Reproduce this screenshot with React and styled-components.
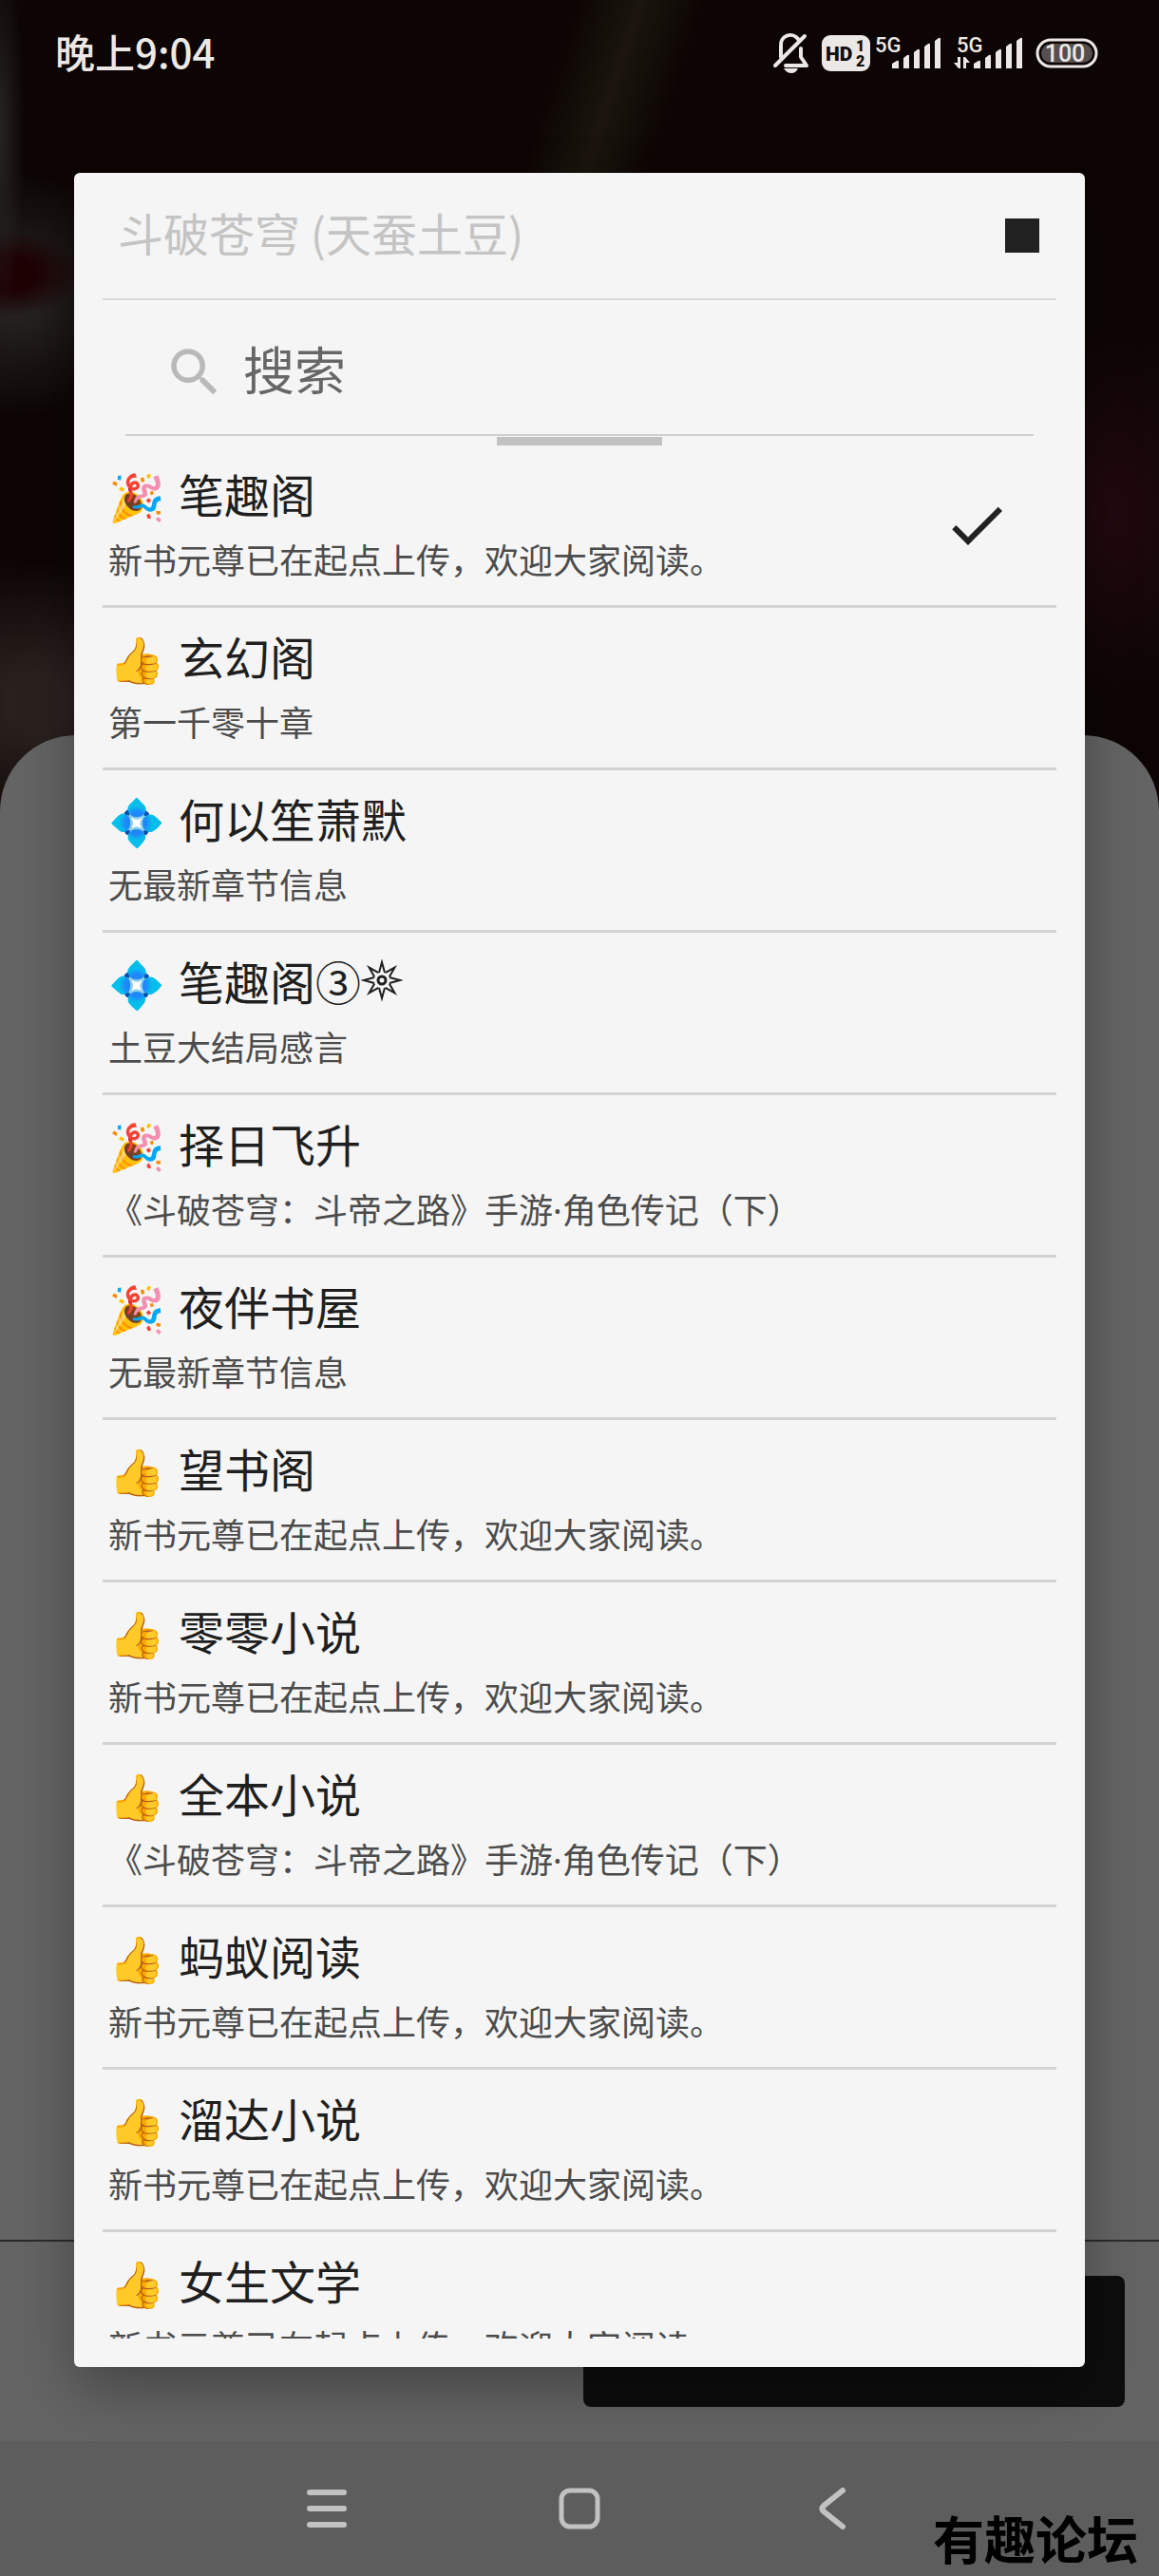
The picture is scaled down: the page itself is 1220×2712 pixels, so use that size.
import React, { useState } from 'react';
import styled, { createGlobalStyle } from 'styled-components';

const GlobalStyle = createGlobalStyle`
  * {
    box-sizing: border-box;
  }
  body {
    margin: 0;
    font-family: 'Noto Sans CJK SC', 'Noto Sans', sans-serif;
  }
  button {
    border: 0;
    padding: 0;
    background: none;
    font: inherit;
    color: inherit;
    text-align: left;
  }
`;

const Page = styled.div`
  position: relative;
  display: flex;
  flex-direction: column;
  height: 100vh;
  overflow: hidden;
  background:
    radial-gradient(ellipse 26px 200px at 0 140px, #262422, transparent),
    radial-gradient(ellipse 90px 46px at 0 288px, #1e0003 40%, transparent),
    radial-gradient(ellipse 120px 130px at 20px 310px, #24211f 20%, transparent),
    radial-gradient(ellipse 160px 150px at 40px 740px, #2a211f 20%, transparent),
    radial-gradient(ellipse 120px 200px at 1170px 540px, #220910, transparent),
    linear-gradient(108deg, transparent 45%, #1b150e 50%, transparent 55%) 0 0 / 100% 400px no-repeat,
    #0c0503;
`;

const StatusBar = styled.header`
  display: flex;
  align-items: center;
  justify-content: space-between;
  height: 112px;
  padding: 0 64px 0 58px;
  color: #ece8e6;
`;

const Time = styled.time`
  padding-bottom: 6px;
  font-size: 42px;
  font-weight: 500;
`;

const StatusIcons = styled.div`
  display: flex;
  align-items: center;
  gap: 13px;
  svg {
    display: block;
    font-family: Roboto, sans-serif;
  }
`;

const IconGroup = styled.div`
  display: flex;
  align-items: center;
`;

const Sheet = styled.main`
  flex: 1;
  margin-top: 662px;
  border-radius: 80px 80px 0 0;
  background: #646464;
`;

const ActionBar = styled.div`
  display: flex;
  justify-content: flex-end;
  height: 212px;
  padding: 36px;
  border-top: 2px solid #2b2b2b;
  background: #646464;
`;

const ReadButton = styled.button`
  width: 50%;
  max-width: 570px;
  height: 138px;
  border-radius: 8px;
  background: #0d0d0d;
`;

const NavBar = styled.nav`
  display: flex;
  align-items: center;
  justify-content: center;
  gap: 206px;
  height: 142px;
  background: #5d5d5d;
`;

const NavButton = styled.button`
  position: relative;
  z-index: 1;
  width: 60px;
  height: 60px;
  svg {
    display: block;
  }
`;

const Watermark = styled.div`
  position: absolute;
  right: 22px;
  bottom: 12px;
  z-index: 1;
  color: #000;
  font-size: 54px;
  font-weight: 700;
  line-height: 56px;
`;

const Overlay = styled.div`
  position: absolute;
  inset: 0;
  display: flex;
  padding: 182px 78px 220px;
`;

const Dialog = styled.section`
  flex: 1;
  display: flex;
  flex-direction: column;
  min-width: 0;
  padding: 0 30px 30px;
  border-radius: 6px;
  background: #f5f5f5;
  box-shadow: 0 24px 60px rgba(0, 0, 0, 0.3);
`;

const DialogHeader = styled.div`
  display: flex;
  align-items: center;
  justify-content: space-between;
  height: 134px;
  padding: 0 18px 0 16px;
  border-bottom: 2px solid #dadada;
`;

const DialogTitle = styled.h1`
  margin: 0;
  padding-bottom: 8px;
  color: #c4c4c4;
  font-size: 48px;
  font-weight: 400;
  line-height: 64px;
`;

const StopButton = styled.button`
  width: 36px;
  height: 36px;
  background: #212121;
`;

const SearchBox = styled.label`
  display: flex;
  align-items: center;
  gap: 18px;
  height: 143px;
  margin: 0 24px;
  padding: 10px 40px 0;
  border-bottom: 2px solid #d0d0d0;
`;

const SearchInput = styled.input`
  flex: 1;
  min-width: 0;
  padding: 0 0 8px;
  border: 0;
  outline: 0;
  background: none;
  color: #212121;
  font: inherit;
  font-size: 54px;
  line-height: 72px;
  &::placeholder {
    color: #666;
    opacity: 1;
  }
`;

const LoadingBar = styled.div`
  flex: none;
  align-self: center;
  width: 174px;
  height: 9px;
  margin-top: 1px;
  background: #c1c1c1;
`;

const SourceList = styled.ul`
  flex: 1;
  min-height: 0;
  margin: 0;
  padding: 0;
  overflow: hidden;
  list-style: none;
`;

const SourceItem = styled.li`
  border-bottom: 3px solid #d3d3d3;
`;

const SourceButton = styled.button`
  display: flex;
  align-items: center;
  justify-content: space-between;
  width: 100%;
  height: 168px;
  padding: 0 48px 0 6px;
`;

const SourceText = styled.span`
  display: flex;
  flex-direction: column;
  gap: 12px;
`;

const SourceName = styled.span`
  display: flex;
  align-items: flex-start;
  height: 64px;
  color: #1f1f1f;
  font-size: 48px;
  line-height: 64px;
`;

const Emoji = styled.span`
  width: 74px;
  font-family: 'Noto Color Emoji', sans-serif;
  line-height: 76px;
`;

const SunMark = styled.svg`
  align-self: flex-end;
`;

const Chapter = styled.span`
  color: #4c4c4c;
  font-family: 'Noto Sans', 'Noto Sans CJK SC', sans-serif;
  font-size: 36px;
  line-height: 56px;
`;

const sources = [
  { mark: '🎉', name: '笔趣阁', chapter: '新书元尊已在起点上传，欢迎大家阅读。' },
  { mark: '👍', name: '玄幻阁', chapter: '第一千零十章' },
  { mark: '💠', name: '何以笙萧默', chapter: '无最新章节信息' },
  { mark: '💠', name: '笔趣阁③', sun: true, chapter: '土豆大结局感言' },
  { mark: '🎉', name: '择日飞升', chapter: '《斗破苍穹：斗帝之路》手游·角色传记（下）' },
  { mark: '🎉', name: '夜伴书屋', chapter: '无最新章节信息' },
  { mark: '👍', name: '望书阁', chapter: '新书元尊已在起点上传，欢迎大家阅读。' },
  { mark: '👍', name: '零零小说', chapter: '新书元尊已在起点上传，欢迎大家阅读。' },
  { mark: '👍', name: '全本小说', chapter: '《斗破苍穹：斗帝之路》手游·角色传记（下）' },
  { mark: '👍', name: '蚂蚁阅读', chapter: '新书元尊已在起点上传，欢迎大家阅读。' },
  { mark: '👍', name: '溜达小说', chapter: '新书元尊已在起点上传，欢迎大家阅读。' },
  { mark: '👍', name: '女生文学', chapter: '新书元尊已在起点上传，欢迎大家阅读。' },
];

function Signal({ active }) {
  return (
    <svg width="73" height="44" viewBox="0 0 73 44" fill="currentColor">
      <text x="3" y="21" fontSize="22" fontWeight="500">
        5G
      </text>
      {active && <path d="M7 26v12H5l-5-6h4v-6zM10 38V26h2l5 6h-4v6z" />}
      <path d="M21 33l5-3q2-1 2 1v7h-7zM33 27l4-3q2-1 2 1v13h-6zM44 21l4-3q2-1 2 1v19h-6zM55 15l4-3q2-1 2 1v25h-6zM66 9l4-3q2-1 2 1v31h-6z" />
    </svg>
  );
}

function Sun() {
  return (
    <SunMark width="44" height="54" viewBox="-22 -22 44 54" fill="none" stroke="currentColor" strokeWidth="2">
      <circle r="4" strokeWidth="3" />
      {[0, 45, 90, 135, 180, 225, 270, 315].map((deg) => (
        <path key={deg} d="M-3-8L0-19L3-8" transform={`rotate(${deg})`} />
      ))}
    </SunMark>
  );
}

function App() {
  const [selected, setSelected] = useState(0);
  const [keyword, setKeyword] = useState('');

  const shown = sources.filter((item) => item.name.includes(keyword));

  return (
    <>
      <GlobalStyle />
      <Page>
        <StatusBar>
          <Time>晚上9:04</Time>
          <StatusIcons>
            <IconGroup>
              <svg width="52" height="44" viewBox="0 0 52 44" fill="none" stroke="currentColor" strokeWidth="4" strokeLinecap="round" strokeLinejoin="round">
                <path d="M9 26V14a10 10 0 0 1 18-7M30 17v9l6 9H14M3 35L34 4" />
                <path d="M12 38h15q-2 5-7 5t-8-5z" fill="currentColor" stroke="none" />
              </svg>
              <svg width="53" height="38" viewBox="0 0 53 38">
                <rect width="51" height="38" rx="9" fill="currentColor" />
                <g fill="#120c0a" fontWeight="900">
                  <text x="4" y="27" fontSize="21">HD</text>
                  <text x="36" y="17" fontSize="16">1</text>
                  <text x="36" y="33" fontSize="16">2</text>
                </g>
              </svg>
              <Signal />
            </IconGroup>
            <Signal active />
            <svg width="66" height="32" viewBox="0 0 66 32">
              <rect x="2" y="2" width="62" height="28" rx="14" fill="none" stroke="currentColor" strokeWidth="3" />
              <rect x="6" y="6" width="54" height="20" rx="10" fill="#55504e" />
              <text x="31" y="25" textAnchor="middle" fontSize="25" fontWeight="500" fill="currentColor">
                100
              </text>
            </svg>
          </StatusIcons>
        </StatusBar>
        <Sheet />
        <ActionBar>
          <ReadButton aria-label="阅读" />
        </ActionBar>
        <NavBar>
          <NavButton aria-label="菜单">
            <svg width="60" height="60" fill="none" stroke="#c2c2c2" strokeWidth="6" strokeLinecap="round">
              <path d="M12 13h36M12 30h36M12 47h36" />
            </svg>
          </NavButton>
          <NavButton aria-label="主页">
            <svg width="60" height="60" fill="none" stroke="#c2c2c2" strokeWidth="5">
              <rect x="11" y="11" width="38" height="38" rx="9" />
            </svg>
          </NavButton>
          <NavButton aria-label="返回">
            <svg width="60" height="60" fill="none" stroke="#c2c2c2" strokeWidth="6" strokeLinecap="round" strokeLinejoin="round">
              <path d="M41 11L21 27q-3 3 0 6l20 16" />
            </svg>
          </NavButton>
        </NavBar>
        <Overlay>
          <Dialog role="dialog" aria-labelledby="book-title">
            <DialogHeader>
              <DialogTitle id="book-title">斗破苍穹 (天蚕土豆)</DialogTitle>
              <StopButton aria-label="停止" />
            </DialogHeader>
            <SearchBox>
              <svg width="66" height="66" viewBox="0 0 24 24" fill="#b9b9b9">
                <path d="M15.5 14h-.79l-.28-.27A6.471 6.471 0 0 0 16 9.5 6.5 6.5 0 1 0 9.5 16c1.61 0 3.09-.59 4.23-1.57l.27.28v.79l5 4.99L20.49 19l-4.99-5zm-6 0C7.01 14 5 11.99 5 9.5S7.01 5 9.5 5 14 7.01 14 9.5 11.99 14 9.5 14z" />
              </svg>
              <SearchInput aria-label="搜索" placeholder="搜索" value={keyword} onChange={(e) => setKeyword(e.target.value)} />
            </SearchBox>
            <LoadingBar />
            <SourceList>
              {shown.map((item) => (
                <SourceItem key={item.name}>
                  <SourceButton onClick={() => setSelected(sources.indexOf(item))}>
                    <SourceText>
                      <SourceName>
                        <Emoji>{item.mark}</Emoji>
                        {item.name}
                        {item.sun && <Sun />}
                      </SourceName>
                      <Chapter>{item.chapter}</Chapter>
                    </SourceText>
                    {sources[selected] === item && (
                      <svg width="72" height="72" viewBox="0 0 24 24" fill="#212121">
                        <path d="M9 16.17L4.83 12l-1.42 1.41L9 19 21 7l-1.41-1.41z" />
                      </svg>
                    )}
                  </SourceButton>
                </SourceItem>
              ))}
            </SourceList>
          </Dialog>
        </Overlay>
        <Watermark>有趣论坛</Watermark>
      </Page>
    </>
  );
}

export default App;
